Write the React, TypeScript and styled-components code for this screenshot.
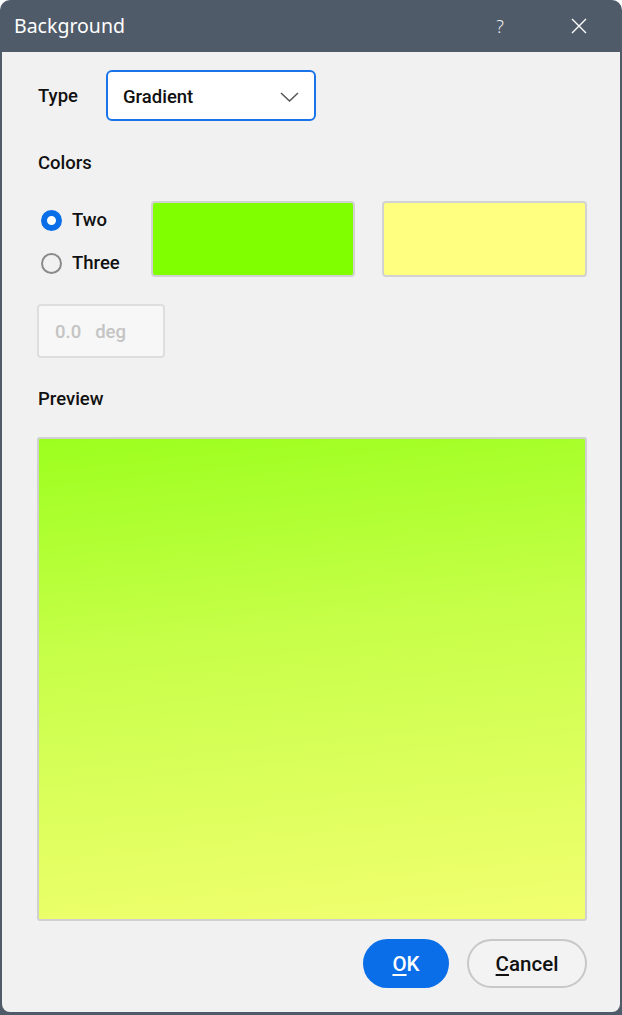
import styled, { createGlobalStyle } from "styled-components";

const GlobalStyle = createGlobalStyle`
  html, body {
    margin: 0;
    padding: 0;
    background: #ffffff;
  }
  body {
    font-family: Roboto, "Noto Sans", sans-serif;
  }
`;

const CloseIcon = () => (
  <svg width="16" height="16" viewBox="0 0 16 16">
    <path d="M1 1 L15 15 M15 1 L1 15" stroke="#ffffff" strokeWidth="1.4" fill="none" />
  </svg>
);

const Chevron = () => (
  <svg width="19" height="10" viewBox="0 0 19 10">
    <polyline points="1,1 9.5,9 18,1" stroke="#555" strokeWidth="1.5" fill="none" />
  </svg>
);

export default function App() {
  return (
    <>
      <GlobalStyle />
      <_Window>
        <_TitleBar>
          <_Title>Background</_Title>
          <_TitleActions>
            <_Help>?</_Help>
            <_CloseButton>
              <CloseIcon />
            </_CloseButton>
          </_TitleActions>
        </_TitleBar>
        <_Body>
          <_TypeRow>
            <_Label>Type</_Label>
            <_Select>
              <span>Gradient</span>
              <Chevron />
            </_Select>
          </_TypeRow>

          <_Label $top={31}>Colors</_Label>

          <_ColorRow>
            <_RadioGroup>
              <_RadioItem>
                <_Radio $checked />
                <span>Two</span>
              </_RadioItem>
              <_RadioItem>
                <_Radio />
                <span>Three</span>
              </_RadioItem>
            </_RadioGroup>
            <_Swatch $color="#80ff00" />
            <_Swatch $color="#ffff80" />
          </_ColorRow>

          <_AngleInput>
            <span>0.0</span>
            <span>deg</span>
          </_AngleInput>

          <_Label $top={30}>Preview</_Label>

          <_Preview />

          <_Buttons>
            <_OkButton>
              <u>O</u>K
            </_OkButton>
            <_CancelButton>
              <u>C</u>ancel
            </_CancelButton>
          </_Buttons>
        </_Body>
      </_Window>
    </>
  );
}

const _Window = styled.div`
  width: 622px;
  height: 1015px;
  box-sizing: border-box;
  background: #505b69;
  border-radius: 10px 10px 0 0;
  display: flex;
  flex-direction: column;
  padding: 0 2px 3px 2px;
`;

const _TitleBar = styled.div`
  height: 52px;
  flex-shrink: 0;
  display: flex;
  align-items: center;
  justify-content: space-between;
  padding: 0 0 0 12px;
`;

const _Title = styled.span`
  font-family: "Noto Sans", sans-serif;
  font-size: 19.5px;
  color: #ffffff;
  margin-top: -1px;
`;

const _TitleActions = styled.div`
  display: flex;
  align-items: center;
  gap: 67px;
  margin-right: 33px;
`;

const _Help = styled.span`
  font-family: "Noto Sans", sans-serif;
  font-size: 18px;
  font-weight: 300;
  color: #eef0f2;
`;

const _CloseButton = styled.span`
  display: flex;
  align-items: center;
`;

const _Body = styled.div`
  flex: 1;
  background: #f1f1f1;
  border-radius: 0 0 8px 8px;
  padding: 18px 33px 0 35px;
  display: flex;
  flex-direction: column;
  align-items: flex-start;
`;

const _TypeRow = styled.div`
  display: flex;
  align-items: center;
  gap: 28px;
`;

const _Label = styled.div<{ $top?: number }>`
  font-size: 18.5px;
  font-weight: 500;
  line-height: 22px;
  color: #111;
  margin-top: ${(p) => p.$top ?? 0}px;
  margin-left: 1px;
`;

const _Select = styled.div`
  width: 210px;
  height: 51px;
  box-sizing: border-box;
  border: 2px solid #1a73e8;
  border-radius: 6px;
  background: #ffffff;
  display: flex;
  align-items: center;
  justify-content: space-between;
  padding: 2px 15px 0 15px;
  font-size: 18.5px;
  font-weight: 500;
  color: #111;
`;

const _ColorRow = styled.div`
  display: flex;
  margin-top: 27px;
  align-self: stretch;
`;

const _RadioGroup = styled.div`
  display: flex;
  flex-direction: column;
  gap: 21px;
  padding-top: 8px;
  width: 114px;
`;

const _RadioItem = styled.label`
  display: flex;
  align-items: center;
  gap: 10px;
  height: 22px;
  font-size: 18.5px;
  font-weight: 500;
  color: #111;
`;

const _Radio = styled.span<{ $checked?: boolean }>`
  width: 21px;
  height: 21px;
  box-sizing: border-box;
  border-radius: 50%;
  margin-left: 4px;
  border: ${(p) => (p.$checked ? "6px solid #0a6ee8" : "2px solid #8a8a8a")};
  background: ${(p) => (p.$checked ? "#ffffff" : "transparent")};
`;

const _Swatch = styled.div<{ $color: string }>`
  width: 205px;
  height: 76px;
  box-sizing: border-box;
  border: 2px solid #d2d2d2;
  border-radius: 4px;
  background: ${(p) => p.$color};
  & + & {
    margin-left: 27px;
  }
`;

const _AngleInput = styled.div`
  margin-top: 27px;
  width: 128px;
  height: 54px;
  box-sizing: border-box;
  background: #f7f7f7;
  border: 2px solid #dedede;
  border-radius: 4px;
  display: flex;
  align-items: center;
  gap: 14px;
  padding: 2px 0 0 16px;
  font-size: 18.5px;
  font-weight: 500;
  color: #c4c4c4;
`;

const _Preview = styled.div`
  margin-top: 27px;
  width: 550px;
  height: 484px;
  box-sizing: border-box;
  border: 2px solid #d0d0d0;
  border-radius: 3px;
  background: linear-gradient(174deg, #9cff1e 0%, #c6ff48 40%, #f2ff70 100%);
`;

const _Buttons = styled.div`
  margin-top: 18px;
  align-self: stretch;
  display: flex;
  justify-content: flex-end;
  gap: 18px;
`;

const _OkButton = styled.button`
  width: 86px;
  height: 49px;
  border: none;
  border-radius: 25px;
  background: #0a6ee8;
  color: #ffffff;
  font-family: Roboto, sans-serif;
  font-size: 20.5px;
  font-weight: 500;
  padding-top: 2px;
  u {
    text-underline-offset: 3px;
  }
`;

const _CancelButton = styled.button`
  width: 120px;
  height: 49px;
  box-sizing: border-box;
  border: 2px solid #c8c8c8;
  border-radius: 25px;
  background: #f3f3f3;
  color: #111;
  font-family: Roboto, sans-serif;
  font-size: 20.5px;
  font-weight: 500;
  padding-top: 2px;
  u {
    text-underline-offset: 3px;
  }
`;
